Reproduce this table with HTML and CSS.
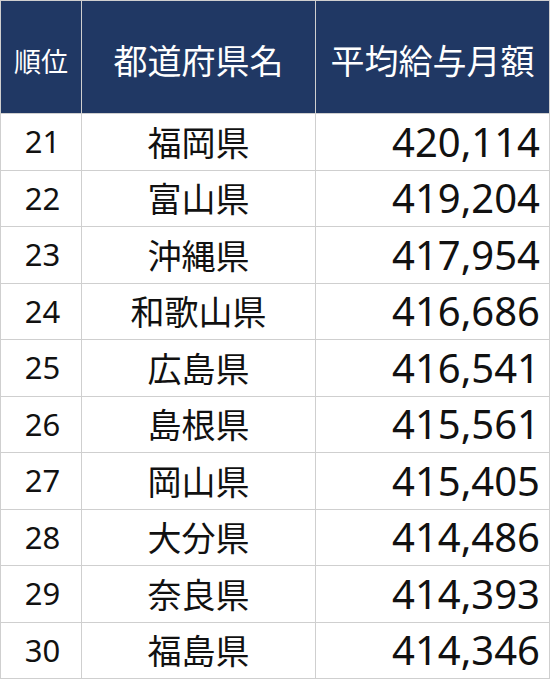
FILE: index.html
```html
<!DOCTYPE html>
<html lang="ja">
<head>
<meta charset="utf-8">
<link rel="stylesheet" href="styles.css">
</head>
<body>
<table class="ranking">
  <colgroup>
    <col class="c-rank">
    <col class="c-name">
    <col class="c-value">
  </colgroup>
  <thead>
    <tr>
      <th class="h-rank">順位</th>
      <th>都道府県名</th>
      <th>平均給与月額</th>
    </tr>
  </thead>
  <tbody>
    <tr><td class="rank">21</td><td class="name">福岡県</td><td class="value">420,114</td></tr>
    <tr><td class="rank">22</td><td class="name">富山県</td><td class="value">419,204</td></tr>
    <tr><td class="rank">23</td><td class="name">沖縄県</td><td class="value">417,954</td></tr>
    <tr><td class="rank">24</td><td class="name">和歌山県</td><td class="value">416,686</td></tr>
    <tr><td class="rank">25</td><td class="name">広島県</td><td class="value">416,541</td></tr>
    <tr><td class="rank">26</td><td class="name">島根県</td><td class="value">415,561</td></tr>
    <tr><td class="rank">27</td><td class="name">岡山県</td><td class="value">415,405</td></tr>
    <tr><td class="rank">28</td><td class="name">大分県</td><td class="value">414,486</td></tr>
    <tr><td class="rank">29</td><td class="name">奈良県</td><td class="value">414,393</td></tr>
    <tr><td class="rank">30</td><td class="name">福島県</td><td class="value">414,346</td></tr>
  </tbody>
</table>
</body>
</html>
```
FILE: styles.css
```css
html, body {
  margin: 0;
  padding: 0;
  background: #ffffff;
}

.ranking {
  border-collapse: collapse;
  table-layout: fixed;
  width: 549px;
  font-family: "Noto Sans CJK JP", sans-serif;
  color: #111111;
}

.c-rank { width: 81px; }
.c-name { width: 234px; }
.c-value { width: 234px; }

.ranking th,
.ranking td {
  border: 1px solid #cfcfcf;
  padding: 0;
  line-height: 1;
  vertical-align: middle;
}

.ranking thead tr {
  height: 113px;
}

.ranking th {
  background: #203864;
  color: #ffffff;
  font-weight: normal;
  font-size: 34px;
  text-align: center;
  padding-top: 6px;
}

.ranking th.h-rank {
  font-size: 27px;
}

.ranking tbody tr {
  height: 56.5px;
}

.ranking td.rank {
  text-align: center;
  font-family: "Noto Sans", sans-serif;
  font-size: 31px;
  padding-left: 3px;
}

.ranking td.name {
  text-align: center;
  font-size: 34px;
}

.ranking td.value {
  text-align: right;
  font-family: "Noto Sans", sans-serif;
  font-size: 40px;
  padding-right: 9px;
}
```
